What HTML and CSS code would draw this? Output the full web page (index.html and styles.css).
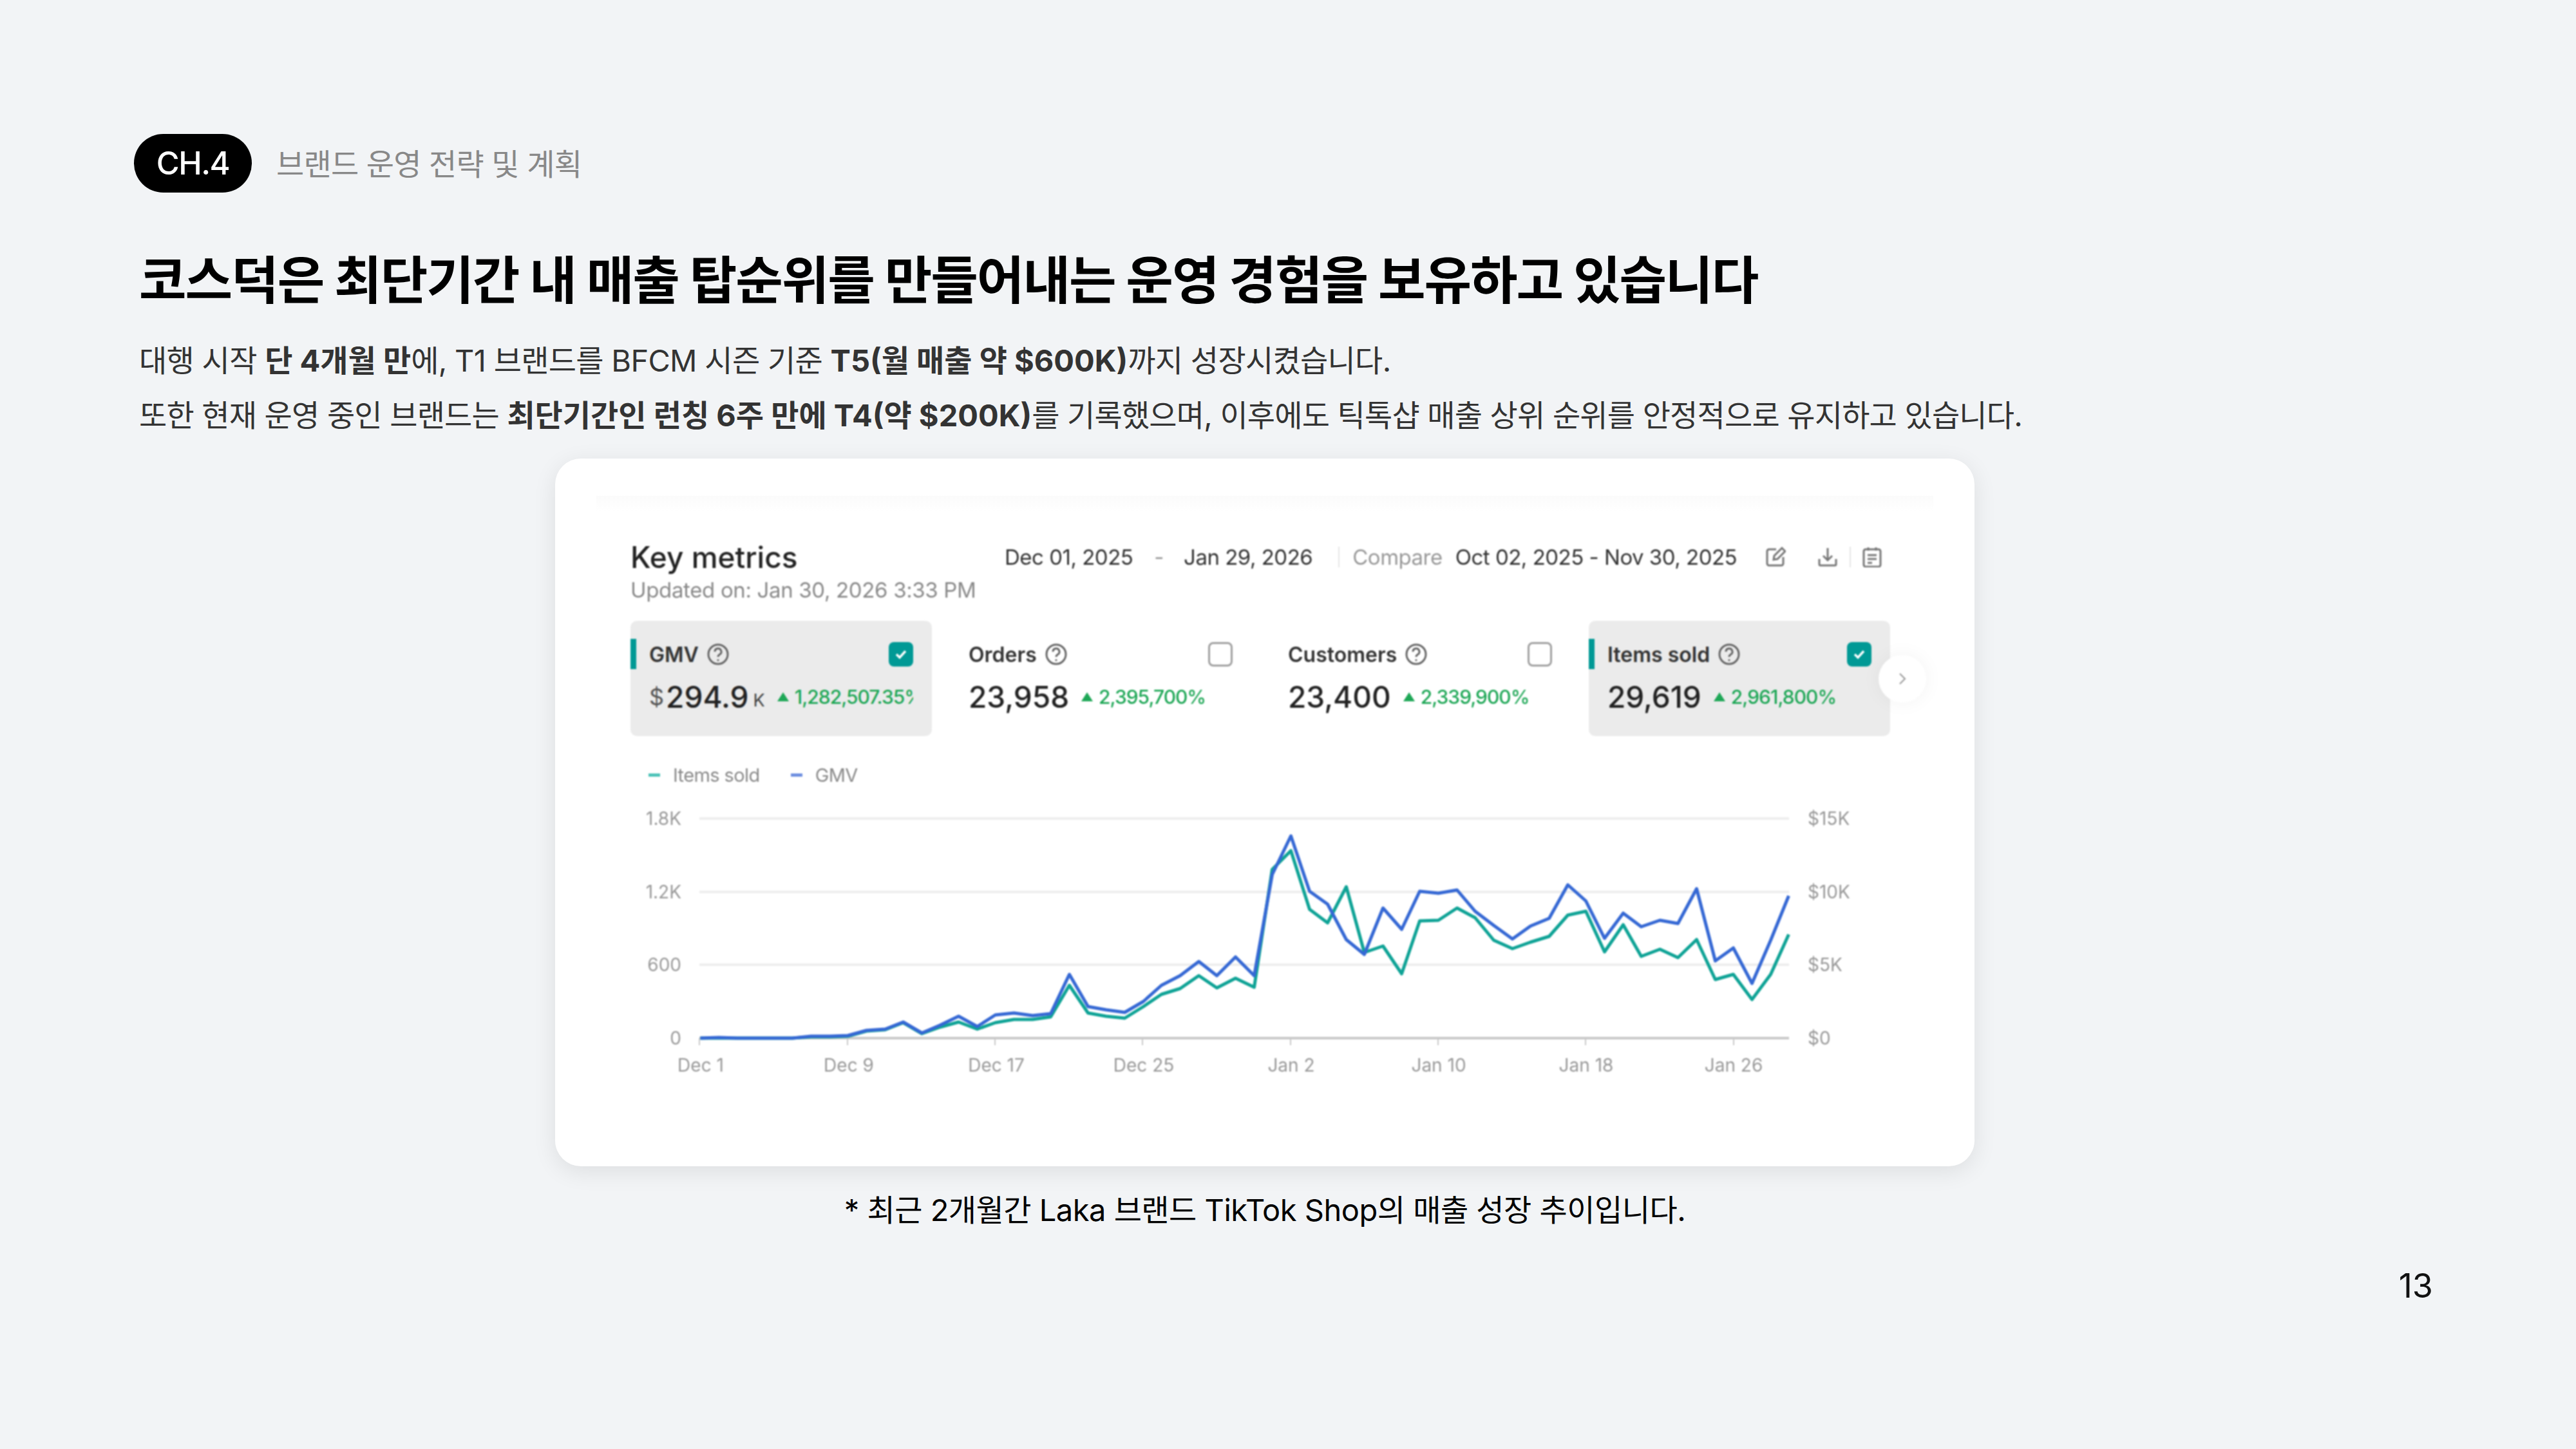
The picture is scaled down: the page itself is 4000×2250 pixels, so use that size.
FILE: index.html
```html
<!DOCTYPE html>
<html lang="ko">
<head>
  <meta charset="UTF-8" />
  <title>CH.4 브랜드 운영 전략 및 계획</title>
  <link rel="stylesheet" href="styles.css">
</head>
<body>
<div class="slide">

  <!-- 챕터 헤더 -->
  <div class="chapter">
    <span class="chapter-pill">CH.4</span>
    <span class="chapter-name">브랜드 운영 전략 및 계획</span>
  </div>

  <h1 class="headline">코스덕은 최단기간 내 매출 탑순위를 만들어내는 운영 경험을 보유하고 있습니다</h1>

  <p class="lead">대행 시작 <strong>단 4개월 만</strong>에, T1 브랜드를 BFCM 시즌 기준 <strong>T5(월 매출 약 $600K)</strong>까지 성장시켰습니다.</p>
  <p class="lead">또한 현재 운영 중인 브랜드는 <strong>최단기간인 런칭 6주 만에 T4(약 $200K)</strong>를 기록했으며, 이후에도 틱톡샵 매출 상위 순위를 안정적으로 유지하고 있습니다.</p>

  <div class="figure">
    <div class="card">
      <div class="card-strip"></div>

      <div class="card-head">
        <div class="title-block">
          <div class="card-title">Key metrics</div>
          <div class="card-updated">Updated on: Jan 30, 2026 3:33 PM</div>
        </div>
        <div class="date-bar">
          <span class="date-from">Dec 01, 2025</span>
          <span class="date-dash">-</span>
          <span class="date-to">Jan 29, 2026</span>
          <span class="date-sep"></span>
          <span class="date-compare">Compare</span>
          <span class="date-range">Oct 02, 2025 - Nov 30, 2025</span>
          <svg class="tool tool-edit" viewBox="0 0 32 32"><path d="M17 4H6a3 3 0 0 0-3 3v19a3 3 0 0 0 3 3h19a3 3 0 0 0 3-3V16"/><path d="M13 20l1-6L26 2l5 5-12 12z"/></svg>
          <svg class="tool tool-download" viewBox="0 0 32 32"><path d="M16 2v19M9 14l7 7 7-7"/><path d="M3 19v8a2 2 0 0 0 2 2h22a2 2 0 0 0 2-2v-8"/></svg>
          <span class="tool-sep"></span>
          <svg class="tool tool-report" viewBox="0 0 32 32"><rect x="3" y="4" width="26" height="27" rx="3"/><path d="M10 1v5M22 1v5M9 13h14M9 19h14M9 25h7"/></svg>
        </div>
      </div>

      <div class="metrics">
        <div class="metric metric-on">
          <div class="metric-top">
            <span class="metric-label">GMV</span>
            <svg class="help" viewBox="0 0 34 34"><circle cx="17" cy="17" r="15"/><path d="M12 13a5 5 0 1 1 7.500 4.300c-1.700 1-2.500 1.900-2.500 3.700"/><circle class="help-dot" cx="17" cy="26" r="1.600"/></svg>
            <span class="check check-on"><svg viewBox="0 0 38 38"><path d="M12 19l5 5 9-10"/></svg></span>
          </div>
          <div class="metric-value">
            <span class="value-unit">$</span><span class="value-num">294.9</span><span class="value-k">K</span>
            <span class="delta-arrow"></span><span class="delta">1,282,507.35%</span>
          </div>
        </div>
        <div class="metric">
          <div class="metric-top">
            <span class="metric-label">Orders</span>
            <svg class="help" viewBox="0 0 34 34"><circle cx="17" cy="17" r="15"/><path d="M12 13a5 5 0 1 1 7.500 4.300c-1.700 1-2.500 1.900-2.500 3.700"/><circle class="help-dot" cx="17" cy="26" r="1.600"/></svg>
            <span class="check"></span>
          </div>
          <div class="metric-value">
            <span class="value-num">23,958</span>
            <span class="delta-arrow"></span><span class="delta">2,395,700%</span>
          </div>
        </div>
        <div class="metric">
          <div class="metric-top">
            <span class="metric-label">Customers</span>
            <svg class="help" viewBox="0 0 34 34"><circle cx="17" cy="17" r="15"/><path d="M12 13a5 5 0 1 1 7.500 4.300c-1.700 1-2.500 1.900-2.500 3.700"/><circle class="help-dot" cx="17" cy="26" r="1.600"/></svg>
            <span class="check"></span>
          </div>
          <div class="metric-value">
            <span class="value-num">23,400</span>
            <span class="delta-arrow"></span><span class="delta">2,339,900%</span>
          </div>
        </div>
        <div class="metric metric-on">
          <div class="metric-top">
            <span class="metric-label">Items sold</span>
            <svg class="help" viewBox="0 0 34 34"><circle cx="17" cy="17" r="15"/><path d="M12 13a5 5 0 1 1 7.500 4.300c-1.700 1-2.500 1.900-2.500 3.700"/><circle class="help-dot" cx="17" cy="26" r="1.600"/></svg>
            <span class="check check-on"><svg viewBox="0 0 38 38"><path d="M12 19l5 5 9-10"/></svg></span>
          </div>
          <div class="metric-value">
            <span class="value-num">29,619</span>
            <span class="delta-arrow"></span><span class="delta">2,961,800%</span>
          </div>
        </div>
        <span class="metrics-next"><svg viewBox="0 0 20 32"><path d="M5 6l10 10-10 10"/></svg></span>
      </div>

      <div class="legend">
        <span class="legend-dash legend-teal"></span><span class="legend-name">Items sold</span>
        <span class="legend-dash legend-blue"></span><span class="legend-name">GMV</span>
      </div>

      <!-- 차트: 좌표는 전체 화면 기준 -->
      <svg class="chart" viewBox="980 1240 1900 440">
        <g class="grid-lines">
          <line x1="1087" x2="2779" y1="1271" y2="1271"/>
          <line x1="1087" x2="2779" y1="1385" y2="1385"/>
          <line x1="1087" x2="2779" y1="1498" y2="1498"/>
        </g>
        <line class="axis" x1="1087" x2="2779" y1="1612" y2="1612"/>
        <g class="ticks">
          <line x1="1087" x2="1087" y1="1612" y2="1623"/>
          <line x1="1317" x2="1317" y1="1612" y2="1623"/>
          <line x1="1546" x2="1546" y1="1612" y2="1623"/>
          <line x1="1775" x2="1775" y1="1612" y2="1623"/>
          <line x1="2005" x2="2005" y1="1612" y2="1623"/>
          <line x1="2234" x2="2234" y1="1612" y2="1623"/>
          <line x1="2463" x2="2463" y1="1612" y2="1623"/>
          <line x1="2693" x2="2693" y1="1612" y2="1623"/>
        </g>
        <g class="labels labels-left">
          <text x="1059" y="1281">1.8K</text>
          <text x="1059" y="1395">1.2K</text>
          <text x="1059" y="1508">600</text>
          <text x="1059" y="1622">0</text>
        </g>
        <g class="labels labels-right">
          <text x="2808" y="1281">$15K</text>
          <text x="2808" y="1395">$10K</text>
          <text x="2808" y="1508">$5K</text>
          <text x="2808" y="1622">$0</text>
        </g>
        <g class="labels labels-x">
          <text x="1089" y="1664">Dec 1</text>
          <text x="1319" y="1664">Dec 9</text>
          <text x="1548" y="1664">Dec 17</text>
          <text x="1777" y="1664">Dec 25</text>
          <text x="2006" y="1664">Jan 2</text>
          <text x="2235" y="1664">Jan 10</text>
          <text x="2464" y="1664">Jan 18</text>
          <text x="2693" y="1664">Jan 26</text>
        </g>
        <polyline class="line-teal" transform="translate(1.5 0)" points="1087,1612 1116,1612 1144,1612 1173,1612 1202,1612 1230,1612 1259,1610 1288,1610 1316,1609 1345,1601 1374,1599 1402,1588 1431,1605 1459,1595 1488,1587 1517,1598 1545,1588 1574,1583 1603,1583 1631,1579 1660,1530 1689,1573 1717,1578 1746,1581 1775,1563 1803,1544 1832,1535 1861,1515 1889,1534 1918,1519 1947,1533 1975,1350 2004,1321 2033,1412 2061,1433 2090,1377 2118,1479 2147,1469 2176,1512 2204,1430 2233,1429 2262,1410 2290,1425 2319,1460 2348,1473 2376,1463 2405,1454 2434,1421 2462,1415 2491,1478 2520,1436 2548,1485 2577,1474 2605,1487 2634,1459 2663,1521 2691,1513 2720,1552 2749,1513 2777,1451"/>
        <polyline class="line-blue" transform="translate(1.5 0)" points="1087,1612 1116,1611 1144,1612 1173,1612 1202,1612 1230,1612 1259,1609 1288,1609 1316,1608 1345,1600 1374,1598 1402,1587 1431,1604 1459,1592 1488,1578 1517,1594 1545,1576 1574,1573 1603,1577 1631,1574 1660,1513 1689,1563 1717,1568 1746,1572 1775,1555 1803,1530 1832,1515 1861,1493 1889,1515 1918,1486 1947,1515 1975,1358 2004,1298 2033,1384 2061,1404 2090,1459 2118,1482 2147,1410 2176,1443 2204,1384 2233,1387 2262,1382 2290,1415 2319,1437 2348,1458 2376,1438 2405,1426 2434,1374 2462,1399 2491,1457 2520,1418 2548,1439 2577,1429 2605,1434 2634,1380 2663,1492 2691,1472 2720,1527 2749,1460 2777,1391"/>
      </svg>
    </div>

    <p class="caption">* 최근 2개월간 Laka 브랜드 TikTok Shop의 매출 성장 추이입니다.</p>
  </div>

  <div class="page-num">13</div>
</div>
</body>
</html>
```

FILE: styles.css
```css
* {
  box-sizing: border-box;
  margin: 0;
  padding: 0;
}

body {
  width: 4000px;
  height: 2250px;
  background-color: #f2f4f6;
  font-family: Inter, "Noto Sans CJK KR", sans-serif;
  overflow: hidden;
}

.slide {
  padding: 208px 222px 0 208px;
  display: flex;
  flex-direction: column;
}

/* 챕터 헤더 */
.chapter {
  display: flex;
  align-items: center;
  gap: 38px;
  height: 91px;
}

.chapter-pill {
  width: 183px;
  height: 91px;
  border-radius: 46px;
  background-color: #000;
  color: #fff;
  font-size: 49px;
  font-weight: 500;
  letter-spacing: -1.5px;
  display: flex;
  align-items: center;
  justify-content: center;
}

.chapter-name {
  padding-bottom: 4px;
  color: #888;
  font-size: 47px;
  letter-spacing: -0.8px;
}

.headline {
  margin: 78px 0 0 8px;
  font-size: 80px;
  line-height: 116px;
  font-weight: 700;
  letter-spacing: -2.05px;
  color: #000;
  white-space: nowrap;
}

.lead {
  margin-left: 8px;
  font-size: 47px;
  line-height: 85px;
  letter-spacing: -0.8px;
  color: #333;
  white-space: nowrap;
}

.headline + .lead {
  margin-top: 24px;
  letter-spacing: -0.7px;
}

.lead strong {
  font-weight: 700;
  letter-spacing: 0;
}

/* 대시보드 캡처 */
.figure {
  width: 2204px;
  margin: 25px 0 0 654px;
}

.card {
  position: relative;
  width: 2204px;
  height: 1099px;
  padding: 130px 0 0 117px;
  background-color: #fff;
  border-radius: 40px;
  box-shadow: 0 8px 36px rgba(0, 0, 0, 0.09);
  color: #222;
}

/* 캡처 이미지 느낌의 약한 흐림 */
.card-head,
.metrics,
.legend,
.chart {
  filter: blur(0.8px);
}

.card-strip {
  position: absolute;
  top: 58px;
  left: 64px;
  right: 64px;
  height: 24px;
  background: linear-gradient(#fbfbfb, #fff);
}

.card-head {
  display: flex;
}

.title-block {
  width: 581px;
}

.card-title {
  font-size: 46px;
  line-height: 46px;
  font-weight: 500;
}

.card-updated {
  margin-top: 6px;
  font-size: 33px;
  line-height: 44px;
  letter-spacing: -0.35px;
  color: #8a8a8a;
}

.date-bar {
  display: flex;
  align-items: center;
  height: 46px;
  font-size: 33px;
  letter-spacing: -0.5px;
  color: #333;
}

.date-dash {
  margin-left: 33px;
  color: #999;
}

.date-to {
  margin-left: 31px;
}

.date-sep {
  width: 2px;
  height: 32px;
  margin: 0 20px 0 40px;
  background-color: #e6e6e6;
}

.date-compare {
  color: #999;
}

.date-range {
  margin-left: 20px;
}

.tool {
  width: 32px;
  height: 32px;
  fill: none;
  stroke: #777;
  stroke-width: 3;
}

.tool-edit {
  margin-left: 44px;
}

.tool-download {
  margin-left: 49px;
}

.tool-sep {
  width: 2px;
  height: 32px;
  margin: 0 17px 0 18px;
  background-color: #e6e6e6;
}

/* 지표 카드 */
.metrics {
  position: relative;
  display: grid;
  grid-template-columns: repeat(4, 468px);
  gap: 28px;
  width: 1956px;
  margin-top: 26px;
}

.metric {
  position: relative;
  height: 179px;
  padding: 32px 29px 0;
  border-radius: 10px;
}

.metric-on {
  background-color: #ebebeb;
}

.metric-on::before {
  content: "";
  position: absolute;
  left: 0;
  top: 28px;
  width: 9px;
  height: 47px;
  background-color: #009995;
}

.metric-top {
  display: flex;
  align-items: center;
  height: 40px;
}

.metric-label {
  font-size: 32px;
  font-weight: 600;
  color: #333;
}

.help {
  width: 34px;
  height: 34px;
  margin-left: 13px;
  fill: none;
  stroke: #666;
  stroke-width: 3;
}

.help-dot {
  fill: #666;
  stroke: none;
}

.check {
  margin-left: auto;
  width: 38px;
  height: 38px;
  border: 3px solid #a0a0a0;
  border-radius: 8px;
  background-color: #fff;
}

.check-on {
  border: none;
  background-color: #009995;
}

.check svg {
  display: block;
  fill: none;
  stroke: #fff;
  stroke-width: 3.5;
}

.metric-value {
  display: flex;
  align-items: center;
  height: 58px;
  margin-top: 17px;
  overflow: hidden;
  white-space: nowrap;
}

.value-unit {
  margin-right: 3px;
  font-size: 36px;
  color: #555;
}

.value-num {
  font-size: 46px;
  font-weight: 500;
}

.value-k {
  margin-left: 7px;
  padding-top: 10px;
  font-size: 27px;
  color: #444;
}

.delta-arrow {
  flex: none;
  width: 0;
  height: 0;
  margin: 0 9px 0 19px;
  border-left: 9px solid transparent;
  border-right: 9px solid transparent;
  border-bottom: 14px solid #1ea756;
}

.delta {
  font-size: 30px;
  font-weight: 500;
  letter-spacing: -1px;
  color: #1ea756;
}

.metrics-next {
  position: absolute;
  left: 1938px;
  top: 53px;
  width: 74px;
  height: 74px;
  border-radius: 50%;
  background-color: #fff;
  box-shadow: 0 0 30px rgba(0, 0, 0, 0.05);
  display: flex;
  align-items: center;
  justify-content: center;
}

.metrics-next svg {
  width: 16px;
  height: 26px;
  fill: none;
  stroke: #999;
  stroke-width: 2.5;
}

/* 범례 */
.legend {
  display: flex;
  align-items: center;
  height: 40px;
  margin-top: 40px;
  padding-left: 28px;
  font-size: 29px;
  letter-spacing: -0.6px;
  color: #8a8a8a;
}

.legend-dash {
  width: 18px;
  height: 5px;
  margin-right: 20px;
}

.legend-teal {
  background-color: #4cc3b8;
}

.legend-blue {
  background-color: #6d8fe0;
}

.legend-name {
  margin-right: 48px;
}

/* 차트 */
.chart {
  display: block;
  width: 1900px;
  height: 440px;
  margin-top: 17px;
}

.grid-lines line {
  stroke: #eeeeee;
  stroke-width: 4;
}

.axis {
  stroke: #c9c9c9;
  stroke-width: 4;
}

.ticks line {
  stroke: #c9c9c9;
  stroke-width: 2;
}

.labels text {
  font-size: 28px;
  fill: #999;
}

.labels-left text {
  text-anchor: end;
}

.labels-x text {
  text-anchor: middle;
}

.line-teal,
.line-blue {
  fill: none;
  stroke-width: 5;
  stroke-linejoin: round;
}

.line-teal {
  stroke: #0fa396;
}

.line-blue {
  stroke: #3568d4;
}

.caption {
  margin-top: 36px;
  font-size: 47px;
  line-height: 64px;
  letter-spacing: -0.5px;
  color: #000;
  text-align: center;
}

.page-num {
  align-self: flex-end;
  margin-top: 54px;
  font-size: 52px;
  line-height: 64px;
  color: #111;
}
```
